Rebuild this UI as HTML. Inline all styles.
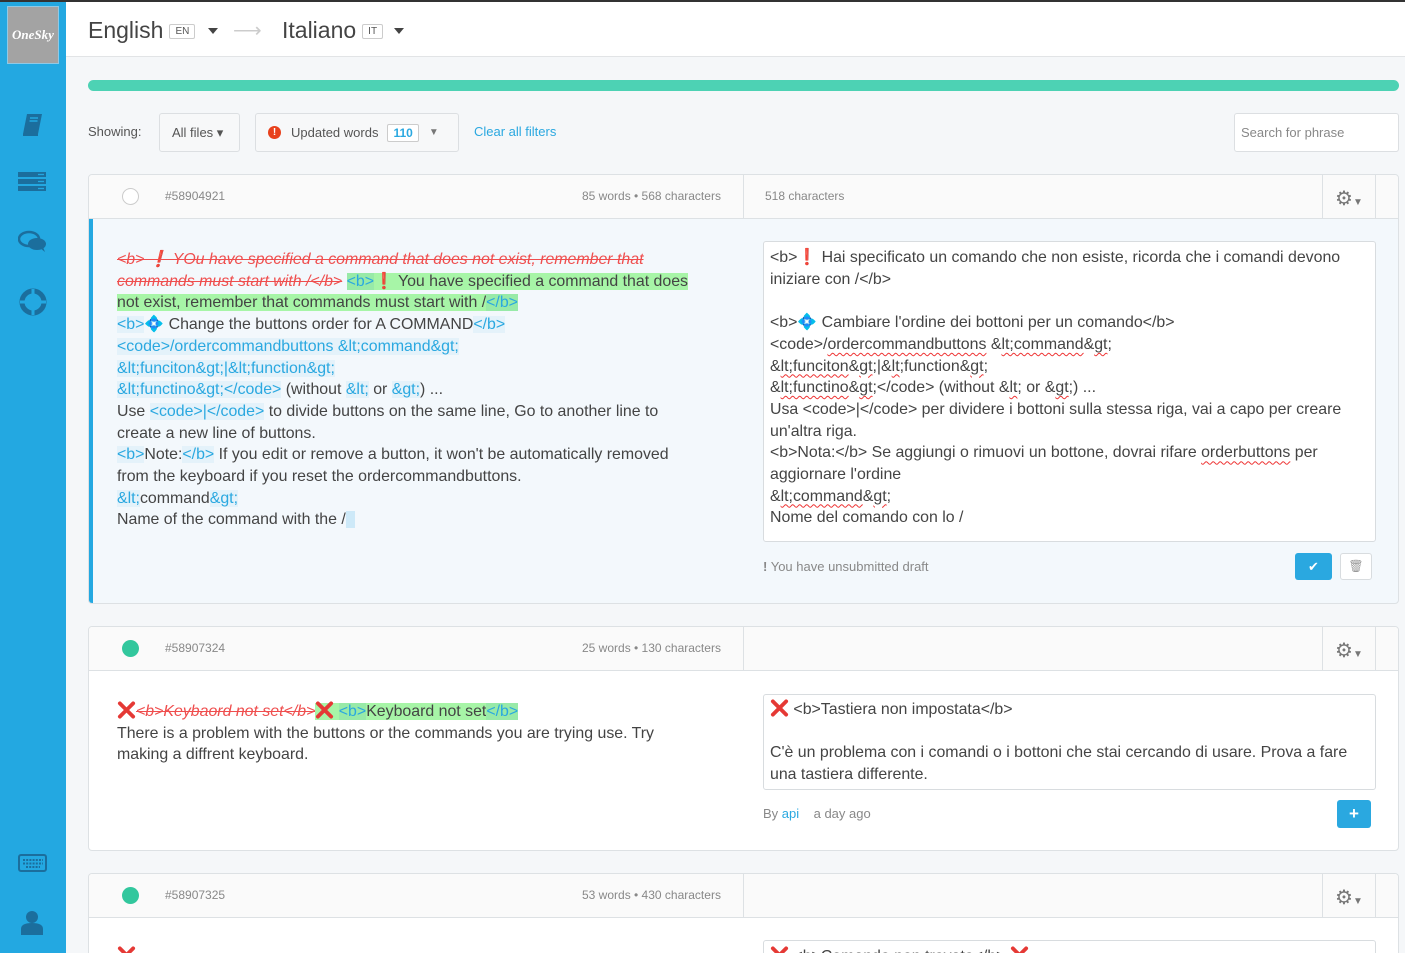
<!DOCTYPE html>
<html style="overflow:hidden;height:953px"><head><meta charset="utf-8">
<style>
*{box-sizing:border-box;margin:0;padding:0}
body{width:1405px;height:953px;overflow:hidden;background:#f5f7f9;font-family:"Liberation Sans",sans-serif;color:#444;position:relative}
.abs{position:absolute}
#top{left:0;top:0;width:1405px;height:2px;background:#333}
#side{left:0;top:2px;width:66px;height:951px;background:#23a8e1}
#logo{left:7px;top:4px;width:52px;height:58px;background:#a3a3a3;border:1px solid #8fc9e6;color:#fff;font:italic bold 13px "Liberation Serif",serif;display:flex;align-items:center;justify-content:center}
#head{left:66px;top:2px;width:1339px;height:55px;background:#fff;border-bottom:1px solid #e2e4e6}
.lang{font-size:23px;color:#444;top:15px}
.code{display:inline-block;border:1px solid #ccc;border-radius:2px;font-size:10px;padding:1px 5px;vertical-align:middle;color:#555;margin-left:6px}
.caret{width:0;height:0;border-left:5px solid transparent;border-right:5px solid transparent;border-top:6px solid #444}
#prog{left:88px;top:80px;width:1311px;height:11px;border-radius:6px;background:#4dd2b4}
.btn{background:#f7f8f9;border:1px solid #dcdfe2;border-radius:3px;font-size:13px;color:#555;display:flex;align-items:center}
.card{left:88px;width:1311px;background:#fff;border:1px solid #dde1e4;border-radius:4px;overflow:hidden}
.ch{position:absolute;left:0;top:0;width:100%;height:44px;background:#fafafa;border-bottom:1px solid #dde1e4;font-size:12px;color:#888}
.ch span{position:absolute;top:14px}
.vl{position:absolute;top:0;width:1px;height:44px;background:#dde1e4}
.txt{position:absolute;font-size:15.9px;line-height:21.7px;color:#444;white-space:nowrap}
.t{color:#2aa8e0;background:#e4f2fa}
.g{background:#a7f5a7}
.gt{color:#2aa8e0;background:#98eaa8}
.del{color:#ef4e4e;text-decoration:line-through;font-style:italic}
.ta{position:absolute;background:#fff;border:1px solid #d8dcdf;border-radius:3px}
.sq{text-decoration:underline wavy #e33;text-decoration-thickness:1px;text-underline-offset:3px}
.x{display:inline-block;width:19px;height:18px;vertical-align:-3px}
.gear{position:absolute;top:12px;color:#777;font-size:20px;line-height:20px}
</style></head><body>
<svg width="0" height="0" style="position:absolute"><defs><symbol id="xx" viewBox="0 0 20 18"><path d="M3 2L17 16M17 2L3 16" stroke="#e53935" stroke-width="4" stroke-linecap="round"/></symbol></defs></svg>
<div id="top" class="abs"></div>
<div id="side" class="abs">
 <div id="logo" class="abs">OneSky</div>
 <svg class="abs" style="left:20px;top:110px" width="26" height="26" viewBox="0 0 26 26"><path d="M7 2h15l-4 20H3z" fill="#1b6e9d"/><path d="M3 22h15v2H3z" fill="#1b6e9d"/><path d="M10 6h8M9.5 9h8" stroke="#23a8e1" stroke-width="1.5"/></svg>
 <svg class="abs" style="left:18px;top:168px" width="29" height="24"><rect y="2" width="28" height="5" fill="#1b6e9d"/><rect y="9" width="28" height="5" fill="#1b6e9d"/><rect y="16" width="28" height="5" fill="#1b6e9d"/><path d="M20 4.5h6M20 11.5h6M20 18.5h6" stroke="#23a8e1" stroke-width="1.2"/></svg>
 <svg class="abs" style="left:18px;top:228px" width="30" height="24"><ellipse cx="11" cy="9" rx="10" ry="7" fill="none" stroke="#1b6e9d" stroke-width="2.5"/><ellipse cx="19" cy="14" rx="9" ry="6" fill="#1b6e9d"/><path d="M22 18l5 4-2-5z" fill="#1b6e9d"/></svg>
 <svg class="abs" style="left:19px;top:286px" width="28" height="28"><circle cx="14" cy="14" r="11" fill="none" stroke="#1b6e9d" stroke-width="5"/><path d="M14 1v6M14 21v6M1 14h6M21 14h6" stroke="#23a8e1" stroke-width="3"/></svg>
 <svg class="abs" style="left:18px;top:852px" width="30" height="20"><rect x="1" y="1" width="27" height="16" rx="2" fill="none" stroke="#1b6e9d" stroke-width="2"/><path d="M5 6h20M5 9.5h20M8 13h14" stroke="#1b6e9d" stroke-width="2" stroke-dasharray="2 1.2"/></svg>
 <svg class="abs" style="left:20px;top:908px" width="24" height="26"><circle cx="12" cy="7" r="6" fill="#1b6e9d"/><path d="M1 25v-6q0-6 11-6t11 6v6z" fill="#1b6e9d"/></svg>
</div>
<div id="head" class="abs">
 <div class="abs lang" style="left:22px">English<span class="code">EN</span></div>
 <div class="abs caret" style="left:142px;top:26px"></div>
 <div class="abs" style="left:167px;top:16px;color:#ccc;font-size:20px">⟶</div>
 <div class="abs lang" style="left:216px">Italiano<span class="code">IT</span></div>
 <div class="abs caret" style="left:328px;top:26px"></div>
</div>
<div id="prog" class="abs"></div>
<div class="abs" style="left:88px;top:124px;font-size:13px;color:#555">Showing:</div>
<div class="abs btn" style="left:159px;top:113px;width:81px;height:39px;padding-left:12px">All files ▾</div>
<div class="abs btn" style="left:255px;top:113px;width:204px;height:39px;padding-left:12px"><span style="display:inline-block;width:13px;height:13px;border-radius:50%;background:#e8411c;color:#fff;font-size:10px;font-weight:bold;text-align:center;line-height:13px;margin-right:10px">!</span>Updated words<span style="border:1px solid #ccc;border-radius:2px;color:#2aa8e0;font-weight:bold;font-size:12px;padding:1px 5px;margin-left:9px;background:#fff">110</span><span style="color:#777;margin-left:10px;font-size:10px">▼</span></div>
<div class="abs" style="left:474px;top:124px;font-size:13px;color:#2aa8e0">Clear all filters</div>
<div class="abs" style="left:1234px;top:113px;width:165px;height:39px;background:#fff;border:1px solid #dcdfe2;border-radius:3px;font-size:13px;color:#888;padding:11px 6px">Search for phrase</div>

<!-- card 1 -->
<div class="abs card" style="top:174px;height:430px;background:#f3f8fc">
 <div class="ch"><span style="left:33px;top:13px;width:17px;height:17px;border:1px solid #ccc;border-radius:50%;background:#fff"></span><span style="left:76px">#58904921</span><span style="left:493px">85 words • 568 characters</span><div class="vl" style="left:654px"></div><span style="left:676px">518 characters</span><div class="vl" style="left:1233px"></div><div class="vl" style="left:1286px"></div><span class="gear" style="left:1246px">⚙<small style="font-size:10px">▼</small></span></div>
 <div class="abs" style="left:0;top:44px;width:4px;height:386px;background:#23a8e1"></div>
 <div class="txt" style="left:28px;top:74px">
<span class="del">&lt;b&gt; ❗ YOu have specified a command that does not exist, remember that</span><br>
<span class="del">commands must start with /&lt;/b&gt;</span> <span class="g"><span class="gt">&lt;b&gt;</span><span style="color:#e53935">❗</span> You have specified a command that does</span><br>
<span class="g">not exist, remember that commands must start with /<span class="gt">&lt;/b&gt;</span></span><br>
<span class="t">&lt;b&gt;</span><span style="color:#2aa8e0">💠</span> Change the buttons order for A COMMAND<span class="t">&lt;/b&gt;</span><br>
<span class="t">&lt;code&gt;/ordercommandbuttons &amp;lt;command&amp;gt;</span><br>
<span class="t">&amp;lt;funciton&amp;gt;|&amp;lt;function&amp;gt;</span><br>
<span class="t">&amp;lt;functino&amp;gt;&lt;/code&gt;</span> (without <span class="t">&amp;lt;</span> or <span class="t">&amp;gt;</span>) ...<br>
Use <span class="t">&lt;code&gt;|&lt;/code&gt;</span> to divide buttons on the same line, Go to another line to<br>
create a new line of buttons.<br>
<span class="t">&lt;b&gt;</span>Note:<span class="t">&lt;/b&gt;</span> If you edit or remove a button, it won't be automatically removed<br>
from the keyboard if you reset the ordercommandbuttons.<br>
<span class="t">&amp;lt;</span>command<span class="t">&amp;gt;</span><br>
Name of the command with the /<span class="t" style="background:#cde9f8">&nbsp;&nbsp;</span>
 </div>
 <div class="ta" style="left:674px;top:66px;width:613px;height:301px"></div>
 <div class="txt" style="left:681px;top:72px">
&lt;b&gt;<span style="color:#e53935">❗</span> Hai specificato un comando che non esiste, ricorda che i comandi devono<br>
iniziare con /&lt;/b&gt;<br><br>
&lt;b&gt;<span style="color:#2aa8e0">💠</span> Cambiare l'ordine dei bottoni per un comando&lt;/b&gt;<br>
&lt;code&gt;/<span class="sq">ordercommandbuttons</span> &amp;<span class="sq">lt;command</span>&amp;<span class="sq">gt</span>;<br>
&amp;<span class="sq">lt;funciton</span>&amp;<span class="sq">gt</span>;|&amp;<span class="sq">lt</span>;function&amp;<span class="sq">gt</span>;<br>
&amp;<span class="sq">lt;functino</span>&amp;<span class="sq">gt</span>;&lt;/code&gt; (without &amp;<span class="sq">lt</span>; or &amp;<span class="sq">gt</span>;) ...<br>
Usa &lt;code&gt;|&lt;/code&gt; per dividere i bottoni sulla stessa riga, vai a capo per creare<br>
un'altra riga.<br>
&lt;b&gt;Nota:&lt;/b&gt; Se aggiungi o rimuovi un bottone, dovrai rifare <span class="sq">orderbuttons</span> per<br>
aggiornare l'ordine<br>
&amp;<span class="sq">lt;command</span>&amp;<span class="sq">gt</span>;<br>
Nome del comando con lo /
 </div>
 <div class="abs" style="left:674px;top:384px;font-size:13px;color:#888"><b style="color:#888">!</b> You have unsubmitted draft</div>
 <div class="abs" style="left:1206px;top:378px;width:37px;height:27px;background:#2aa8e0;border-radius:3px;color:#fff;text-align:center;line-height:27px;font-size:13px">✔</div>
 <div class="abs" style="left:1251px;top:378px;width:32px;height:27px;background:#fff;border:1px solid #d8dcdf;border-radius:3px;color:#999;text-align:center;line-height:25px;font-size:12px">🗑</div>
</div>

<!-- card 2 -->
<div class="abs card" style="top:626px;height:225px">
 <div class="ch"><span style="left:33px;top:13px;width:17px;height:17px;border-radius:50%;background:#32c79d"></span><span style="left:76px">#58907324</span><span style="left:493px">25 words • 130 characters</span><div class="vl" style="left:654px"></div><div class="vl" style="left:1233px"></div><div class="vl" style="left:1286px"></div><span class="gear" style="left:1246px">⚙<small style="font-size:10px">▼</small></span></div>
 <div class="txt" style="left:28px;top:74px">
<span class="del"><svg class="x"><use href="#xx"/></svg>&lt;b&gt;Keybaord not set&lt;/b&gt;</span><span class="g"><svg class="x"><use href="#xx"/></svg> <span class="gt">&lt;b&gt;</span>Keyboard not set<span class="gt">&lt;/b&gt;</span></span><br>
There is a problem with the buttons or the commands you are trying use. Try<br>
making a diffrent keyboard.
 </div>
 <div class="ta" style="left:674px;top:67px;width:613px;height:96px"></div>
 <div class="txt" style="left:681px;top:72px">
<svg class="x"><use href="#xx"/></svg> &lt;b&gt;Tastiera non impostata&lt;/b&gt;<br><br>
C'è un problema con i comandi o i bottoni che stai cercando di usare. Prova a fare<br>
una tastiera differente.
 </div>
 <div class="abs" style="left:674px;top:179px;font-size:13px;color:#888">By <span style="color:#2aa8e0">api</span> &nbsp;&nbsp; a day ago</div>
 <div class="abs" style="left:1248px;top:173px;width:34px;height:28px;background:#2aa8e0;border-radius:3px;color:#fff;text-align:center;line-height:28px;font-size:17px;font-weight:bold">+</div>
</div>

<!-- card 3 -->
<div class="abs card" style="top:873px;height:80px;border-bottom:none;border-radius:4px 4px 0 0">
 <div class="ch"><span style="left:33px;top:13px;width:17px;height:17px;border-radius:50%;background:#32c79d"></span><span style="left:76px">#58907325</span><span style="left:493px">53 words • 430 characters</span><div class="vl" style="left:654px"></div><div class="vl" style="left:1233px"></div><div class="vl" style="left:1286px"></div><span class="gear" style="left:1246px">⚙<small style="font-size:10px">▼</small></span></div>
 <div class="txt" style="left:28px;top:72px"><svg class="x"><use href="#xx"/></svg></div>
 <div class="ta" style="left:674px;top:66px;width:613px;height:60px"></div>
 <div class="txt" style="left:681px;top:72px"><svg class="x"><use href="#xx"/></svg> &lt;b&gt;Comando non trovato&lt;/b&gt; <svg class="x"><use href="#xx"/></svg></div>
</div>
</body></html>
